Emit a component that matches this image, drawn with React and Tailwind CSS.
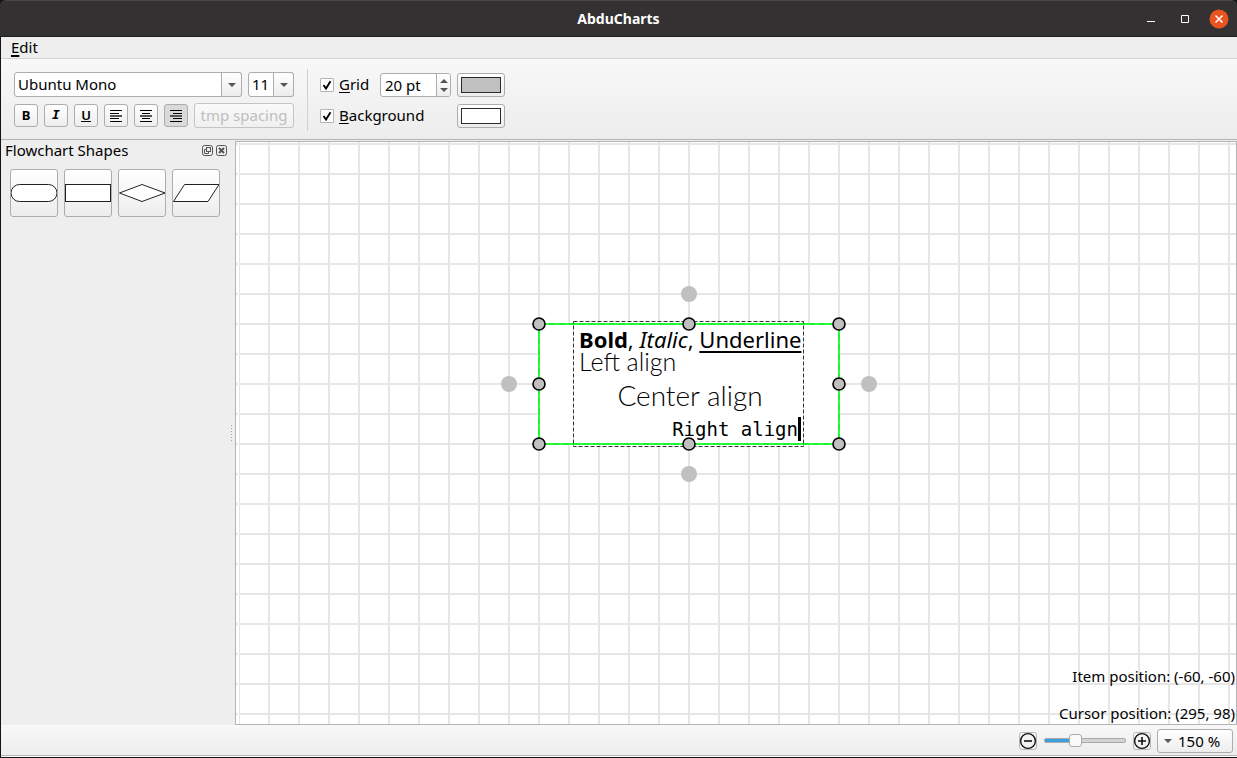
import React from "react";

const raised = "border border-[#adadad] bg-linear-to-b from-white to-[#ededed]";

function DownArrow() {
  return (
    <svg viewBox="0 0 8 4" className="h-1 w-2" aria-hidden="true">
      <path d="M0 0H8L4 4Z" fill="#555" />
    </svg>
  );
}

function Combo({ label, value, className, arrowClass }) {
  return (
    <div className={`relative flex h-[25px] ${className}`}>
      <select
        aria-label={label}
        defaultValue={value}
        className="h-full w-full appearance-none rounded-[3px] border border-[#adadad] bg-white pb-px pl-[3px] text-[15px] leading-5"
      >
        <option>{value}</option>
      </select>
      <span
        className={`pointer-events-none absolute inset-y-0 right-0 flex items-center justify-center rounded-r-[3px] ${raised} ${arrowClass}`}
      >
        <DownArrow />
      </span>
    </div>
  );
}

function ToolButton({ label, active, children }) {
  return (
    <button
      aria-label={label}
      className={`flex h-[23px] w-6 items-center justify-center rounded-[3px] border border-[#adadad] ${
        active ? "bg-[#dadada]" : "bg-linear-to-b from-white to-[#ededed]"
      }`}
    >
      {children}
    </button>
  );
}

const rowTops = [0, 3, 5, 8, 11];

function AlignIcon({ lines }) {
  return (
    <svg viewBox="0 0 12 12" className="size-3" aria-hidden="true" shapeRendering="crispEdges">
      {lines.map(([x, w], i) => (
        <rect
          key={i}
          x={x}
          y={rowTops[i]}
          width={w}
          height={i === 2 ? 2 : 1}
          fill={i === 2 ? "#555" : "#000"}
        />
      ))}
    </svg>
  );
}

function Check({ id, mnemonic, rest }) {
  return (
    <div className="flex items-center gap-[5px] pb-px">
      <span className="relative flex">
        <input
          id={id}
          type="checkbox"
          defaultChecked
          className="peer size-[14px] appearance-none rounded-[1px] border border-[#b4b4b4] bg-white"
        />
        <svg
          viewBox="0 0 14 14"
          className="pointer-events-none absolute inset-0 hidden size-[14px] peer-checked:block"
          aria-hidden="true"
        >
          <path d="M3.5 7L6 10.5L10.5 3.2" fill="none" stroke="#000" strokeWidth="1.9" />
        </svg>
      </span>
      <label htmlFor={id} className="pb-px">
        <span className="underline underline-offset-2">{mnemonic}</span>
        {rest}
      </label>
    </div>
  );
}

function Swatch({ label, color }) {
  return (
    <button aria-label={label} className={`flex h-6 w-12 rounded-[3px] p-[3px] ${raised}`}>
      <span className={`h-full w-full border border-[#2b2b2b] ${color}`} />
    </button>
  );
}

function Toolbar() {
  return (
    <div className="flex h-[81px] items-start border-b border-[#b4b4b4] bg-linear-to-b from-[#f8f8f8] to-[#ededed] pl-[13px] pt-[10px]">
      <div className="flex flex-col gap-[6px] pt-[3px]">
        <div className="flex gap-[6px]">
          <Combo label="Font family" value="Ubuntu Mono" className="w-[228px]" arrowClass="w-[21px]" />
          <Combo label="Font size" value="11" className="w-[46px]" arrowClass="w-[21px]" />
        </div>
        <div className="flex items-center gap-[6px]">
          <ToolButton label="Bold">
            <span className="pb-[2px] text-[13px] leading-4 font-bold">B</span>
          </ToolButton>
          <ToolButton label="Italic">
            <span className="pb-[2px] font-['DejaVu_Sans_Mono',monospace] text-[13px] leading-4 font-bold italic">I</span>
          </ToolButton>
          <ToolButton label="Underline">
            <span className="border-b border-black text-[13px] leading-3 font-semibold">U</span>
          </ToolButton>
          <ToolButton label="Align left">
            <AlignIcon lines={[[0, 12], [0, 9], [0, 12], [0, 9], [0, 12]]} />
          </ToolButton>
          <ToolButton label="Align center">
            <AlignIcon lines={[[0, 12], [2, 8], [0, 12], [2, 8], [0, 12]]} />
          </ToolButton>
          <ToolButton label="Align right" active>
            <AlignIcon lines={[[0, 12], [3, 9], [0, 12], [3, 9], [0, 12]]} />
          </ToolButton>
          <button
            disabled
            className="h-[25px] w-[100px] rounded-[3px] border border-[#c4c4c4] bg-linear-to-b from-[#fafafa] to-[#f0f0f0] pb-px text-[#bebebe]"
          >
            tmp spacing
          </button>
        </div>
      </div>
      <div className="ml-[13px] h-[62px] w-px bg-[#d0d0d0]" />
      <div className="ml-3 flex w-[185px] flex-col gap-[7px] pt-1">
        <div className="flex h-6 items-center">
          <Check id="grid" mnemonic="G" rest="rid" />
          <div className="ml-auto flex h-6 w-[71px] overflow-hidden rounded-[3px] border border-[#adadad] bg-white">
            <input aria-label="Grid size" defaultValue="20 pt" className="w-0 flex-1 pl-1" />
            <div className="flex w-[14px] flex-col items-center justify-center gap-[5px] border-l border-[#adadad] bg-linear-to-b from-white to-[#ededed]">
              <button aria-label="Increase grid size">
                <svg viewBox="0 0 8 4" className="block h-1 w-2">
                  <path d="M0 4H8L4 0Z" fill="#555" />
                </svg>
              </button>
              <button aria-label="Decrease grid size">
                <svg viewBox="0 0 8 4" className="block h-1 w-2">
                  <path d="M0 0H8L4 4Z" fill="#555" />
                </svg>
              </button>
            </div>
          </div>
          <div className="ml-[6px] flex">
            <Swatch label="Grid color" color="bg-[#c0c0c0]" />
          </div>
        </div>
        <div className="flex h-6 items-center justify-between">
          <Check id="background" mnemonic="B" rest="ackground" />
          <Swatch label="Background color" color="bg-white" />
        </div>
      </div>
    </div>
  );
}

const shapes = [
  ["Terminator", <rect x="0" y="14.5" width="46" height="17" rx="8.5" />],
  ["Process", <rect x="0.5" y="14.5" width="45" height="17" />],
  ["Decision", <path d="M0.5 23L23 14.5L46 23L23 31.5Z" />],
  ["Data", <path d="M0.5 31.5L11.5 14.5H46L35 31.5Z" />],
];

function Sidebar() {
  return (
    <aside className="flex w-[234px] shrink-0 bg-[#eeeeee]">
      <div className="flex-1">
        <div className="flex h-[22px] items-center gap-[3px] pb-px pl-1">
          <h2 className="pb-px">Flowchart Shapes</h2>
          <button aria-label="Float panel" className="ml-auto">
            <svg viewBox="0 0 11 11" className="block size-[11px]" fill="none" stroke="#555">
              <rect x="0.5" y="0.5" width="10" height="10" rx="2" />
              <rect x="4.5" y="2.5" width="4" height="4" />
              <path d="M4 4.5H2.5V8.5H6.5V7" />
            </svg>
          </button>
          <button aria-label="Close panel">
            <svg viewBox="0 0 11 11" className="block size-[11px]" fill="none" stroke="#555">
              <rect x="0.5" y="0.5" width="10" height="10" rx="2" />
              <path d="M3 3L8 8M8 3L3 8" strokeWidth="2" />
            </svg>
          </button>
        </div>
        <div className="flex gap-[6px] pl-[9px] pt-[7px]">
          {shapes.map(([name, shape]) => (
            <button key={name} aria-label={name} className={`size-12 rounded-[3px] ${raised}`}>
              <svg viewBox="0 0 46 46" className="block size-[46px]" fill="#fff" stroke="#222">
                {shape}
              </svg>
            </button>
          ))}
        </div>
      </div>
      <div className="flex w-2 flex-col items-center justify-center gap-[2px]">
        {[0, 1, 2, 3, 4, 5].map((i) => (
          <span key={i} className="size-px bg-[#a8a8a8]" />
        ))}
      </div>
    </aside>
  );
}

const handles = [
  [30, 30], [180, 30], [330, 30],
  [30, 90], [330, 90],
  [30, 150], [180, 150], [330, 150],
];
const anchors = [[180, 0], [0, 90], [360, 90], [180, 180]];

function Canvas() {
  return (
    <main className="relative mt-px flex-1 overflow-hidden border border-[#b4b4b4] bg-white">
      <svg className="absolute inset-0 h-full w-full" shapeRendering="crispEdges" aria-hidden="true">
        <defs>
          <pattern id="cells" x="2" y="1" width="30" height="30" patternUnits="userSpaceOnUse">
            <path d="M0 0H30V2H2V30H0Z" fill="#e6e6e6" />
          </pattern>
        </defs>
        <rect width="100%" height="100%" fill="url(#cells)" />
        <rect x="2" width="1" height="100%" fill="#fff" />
      </svg>
      <div className="absolute left-[263px] top-[142px] h-[200px] w-[380px]">
        <svg viewBox="-10 -10 380 200" className="absolute inset-0 h-full w-full" aria-hidden="true">
          <rect x="30" y="30" width="300" height="120" fill="#fff" stroke="#2bff36" strokeWidth="2" />
          <rect x="30" y="30" width="300" height="120" fill="none" stroke="#16e03a" strokeDasharray="6 4" />
          <rect x="64.5" y="27.5" width="230" height="125" fill="none" stroke="#333" strokeDasharray="4 2" />
          {anchors.map(([x, y]) => (
            <circle key={`${x}-${y}`} cx={x} cy={y} r="8" fill="#c0c0c0" />
          ))}
        </svg>
        <div className="absolute left-20 top-[43px] w-[222px] whitespace-nowrap">
          <p className="h-[22px] text-[22px] leading-6">
            <b>Bold</b>, <i>Italic</i>, <u className="underline-offset-3">Underline</u>
          </p>
          <p className="h-7 font-[Lato,sans-serif] text-[25px] leading-6 font-light">Left align</p>
          <p className="h-9 text-center font-[Lato,sans-serif] text-[28px] leading-9 font-light">Center align</p>
          <p className="flex h-8 items-center justify-end font-['DejaVu_Sans_Mono',monospace] text-[19px]">
            Right align
            <span className="h-6 w-[3px] bg-black" />
          </p>
        </div>
        <svg viewBox="-10 -10 380 200" className="absolute inset-0 h-full w-full" aria-hidden="true">
          {handles.map(([x, y]) => (
            <circle key={`${x}-${y}`} cx={x} cy={y} r="6" fill="#c0c0c0" stroke="#000" strokeWidth="1.6" />
          ))}
        </svg>
      </div>
      <div className="absolute right-0 bottom-0 flex flex-col items-end gap-[17px] pr-px pb-px leading-5">
        <p>Item position: (-60, -60)</p>
        <p>Cursor position: (295, 98)</p>
      </div>
    </main>
  );
}

function ZoomIcon({ plus }) {
  return (
    <svg viewBox="0 0 18 18" className="block size-[18px]" fill="none" stroke="#111" aria-hidden="true">
      <rect x="0.5" y="0.5" width="17" height="17" rx="2" stroke="#b8b8b8" />
      <circle cx="9" cy="9" r="7.4" strokeWidth="1.4" />
      <path d={plus ? "M5 9H13M9 5V13" : "M5 9H13"} strokeWidth="1.6" />
    </svg>
  );
}

function StatusBar() {
  return (
    <footer className="flex h-[31px] items-center justify-end border-b border-[#b4b4b4] bg-linear-to-b from-[#f8f8f8] to-[#ededed] pt-px pr-1">
      <button aria-label="Zoom out">
        <ZoomIcon />
      </button>
      <input
        type="range"
        aria-label="Zoom"
        min="0"
        max="100"
        defaultValue="36"
        className="mx-[7px] h-[14px] w-[82px] appearance-none bg-transparent [&::-webkit-slider-runnable-track]:h-[5px] [&::-webkit-slider-runnable-track]:rounded-[2px] [&::-webkit-slider-runnable-track]:border [&::-webkit-slider-runnable-track]:border-[#aaaaaa] [&::-webkit-slider-runnable-track]:bg-[linear-gradient(to_right,#3d9fe0_36%,#d3d3d3_36%)] [&::-webkit-slider-thumb]:-mt-[5px] [&::-webkit-slider-thumb]:size-[13px] [&::-webkit-slider-thumb]:appearance-none [&::-webkit-slider-thumb]:rounded-[3px] [&::-webkit-slider-thumb]:border [&::-webkit-slider-thumb]:border-[#aaaaaa] [&::-webkit-slider-thumb]:bg-[#fafafa]"
      />
      <button aria-label="Zoom in">
        <ZoomIcon plus />
      </button>
      <button className={`ml-[6px] flex h-6 w-[76px] items-center gap-[6px] rounded-[3px] pl-[6px] ${raised}`}>
        <DownArrow />
        <span>150 %</span>
      </button>
    </footer>
  );
}

function TitleBar() {
  return (
    <header className="grid h-[37px] grid-cols-[1fr_auto_1fr] items-center rounded-t-[6px] border-t border-b border-t-[#484646] border-b-[#1f1e1e] bg-[#333132] px-2 text-white">
      <span />
      <h1 className="text-[14px] font-bold">AbduCharts</h1>
      <div className="flex items-center justify-end">
        <button aria-label="Minimize" className="mr-[26px]">
          <svg viewBox="0 0 8 8" className="block size-2">
            <path d="M0 6.5H8" stroke="#fff" />
          </svg>
        </button>
        <button aria-label="Maximize" className="mr-5">
          <svg viewBox="0 0 8 8" className="block size-2">
            <path d="M0.5 0.5H7.5V7.5H0.5Z" stroke="#fff" fill="none" />
          </svg>
        </button>
        <button aria-label="Close">
          <svg viewBox="0 0 20 20" className="block size-5">
            <circle cx="10" cy="10" r="9.5" fill="#e95420" />
            <path d="M6.5 6.5L13.5 13.5M13.5 6.5L6.5 13.5" stroke="#fff" strokeWidth="1.5" />
          </svg>
        </button>
      </div>
    </header>
  );
}

export default function App() {
  return (
    <div className="flex min-h-screen flex-col bg-[#141414] font-['Noto_Sans',sans-serif] text-[15px] leading-5 text-black">
      <TitleBar />
      <div className="mb-px ml-px flex flex-1 flex-col bg-[#eeeeee]">
        <nav className="flex h-[22px] items-center border-b border-[#d2d2d2] pb-px pl-[10px]">
          <button>
            <span className="underline decoration-2 underline-offset-2">E</span>dit
          </button>
        </nav>
        <Toolbar />
        <div className="flex flex-1">
          <Sidebar />
          <Canvas />
        </div>
        <StatusBar />
        <div className="h-px bg-white" />
      </div>
    </div>
  );
}
